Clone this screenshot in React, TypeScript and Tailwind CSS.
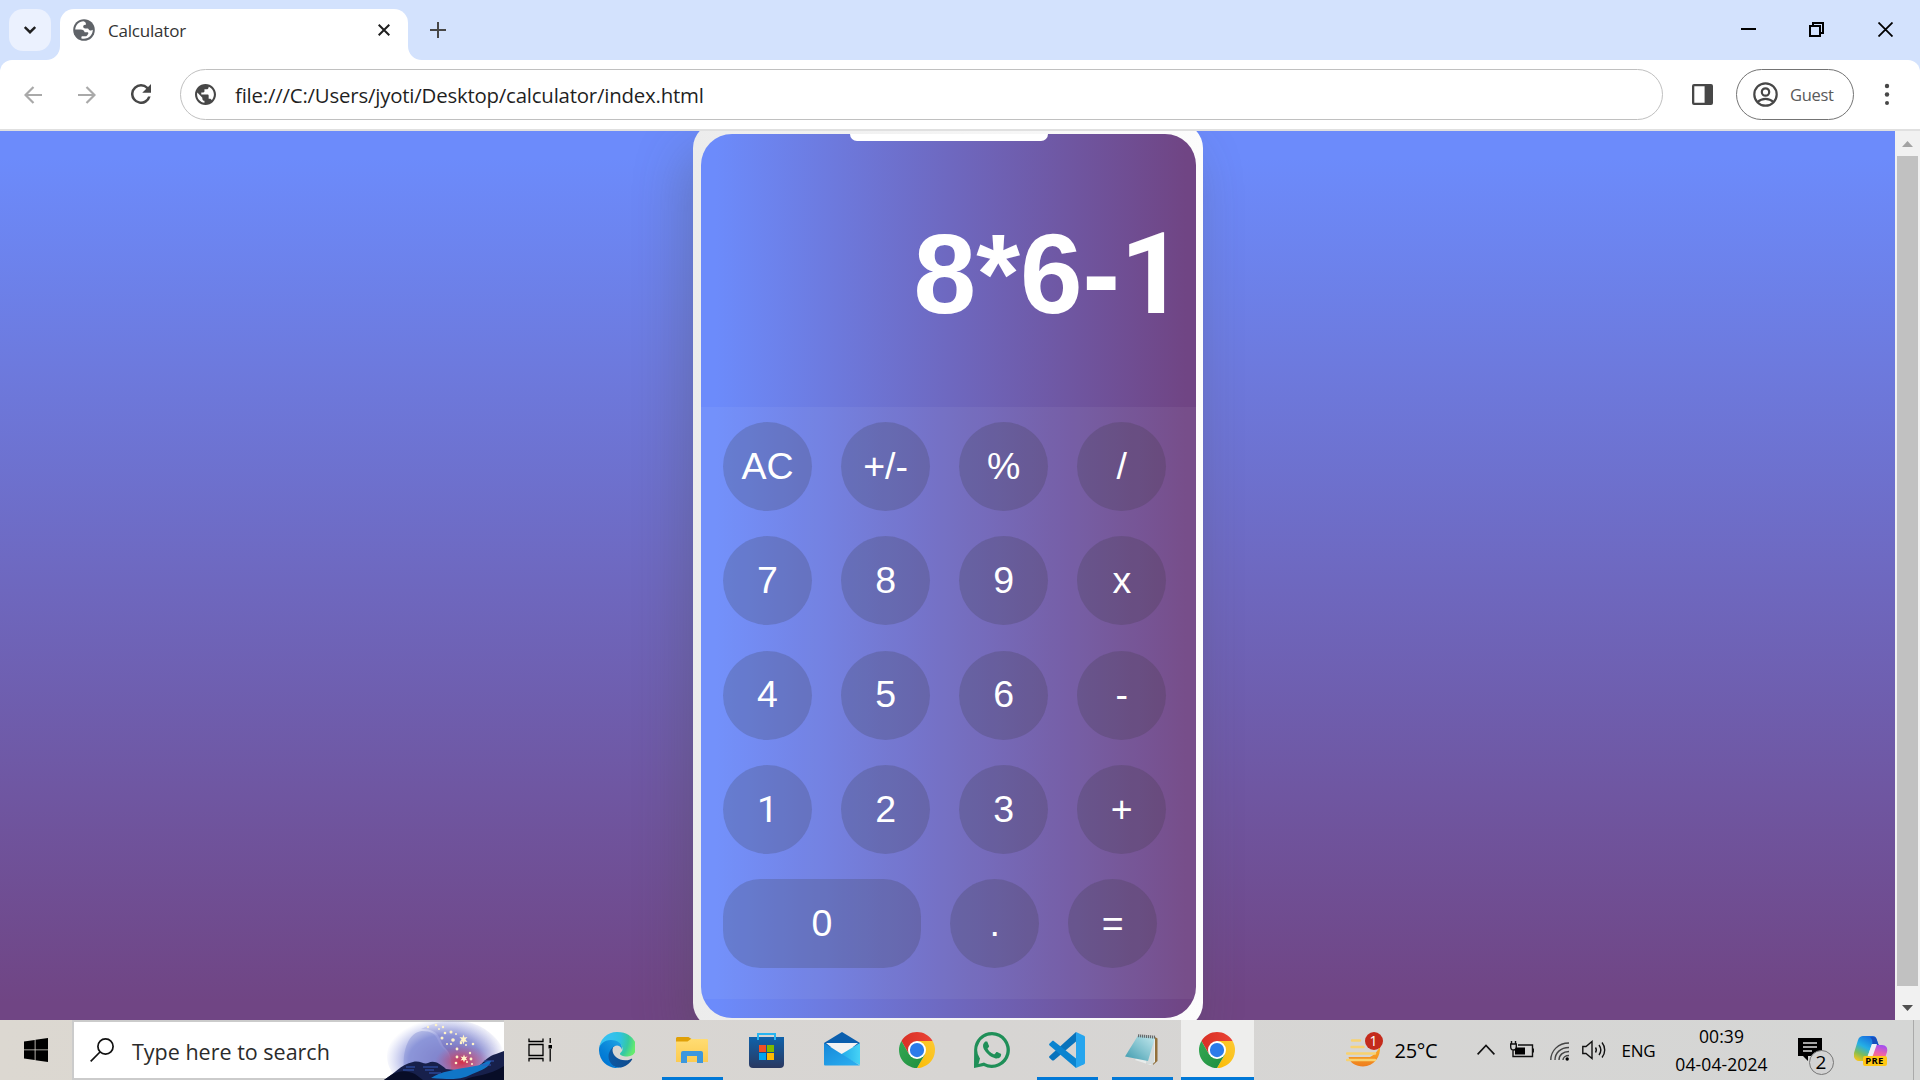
import React from "react";

type IconProps = { className?: string };

const GLOBE =
  "M12 2C6.48 2 2 6.48 2 12s4.48 10 10 10 10-4.48 10-10S17.52 2 12 2zm-1 17.93c-3.95-.49-7-3.85-7-7.93 0-.62.08-1.21.21-1.79L9 15v1c0 1.1.9 2 2 2v1.93zm6.9-2.54c-.26-.81-1-1.39-1.9-1.39h-1v-3c0-.55-.45-1-1-1H8v-2h2c.55 0 1-.45 1-1V7h2c1.1 0 2-.9 2-2v-.41c2.93 1.19 5 4.06 5 7.41 0 2.08-.8 3.97-2.1 5.39z";

function Globe({ className }: IconProps) {
  return (
    <svg viewBox="2 2 20 20" className={className} fill="currentColor">
      <path d={GLOBE} />
    </svg>
  );
}

function TabGlobe({ className }: IconProps) {
  return (
    <svg viewBox="0 0 22 22" className={className}>
      <circle cx="11" cy="11" r="10.8" fill="#5f6368" />
      <path d="M10.5 2.2C6 2.5 2.4 6 2.2 10.6h5.6c2.1 0 3.4 1 3.8 2.6h2.6c1 0 1.4.9.9 1.8l-1 1.4c-.5.6-1.2.9-1.9.9H9.6c-.9 0-1.2.4-1.2.9v1.2A8.9 8.9 0 0 0 19.8 10.8c-1.2.9-2.6 1-3.6.1l-1.2-1.3h-2.8c-1.2 0-2-.9-2-2s.8-1.9 1.9-1.9h.8c.3-1.5-.6-3.2-2.4-3.5Z" fill="#fff" />
    </svg>
  );
}

function Chrome({ className }: IconProps) {
  return (
    <svg viewBox="0 0 48 48" className={className}>
      <defs>
        <linearGradient id="cr" x1="0" x2="1"><stop stopColor="#d93025" /><stop offset="1" stopColor="#ea4335" /></linearGradient>
        <linearGradient id="cy" x1="1" x2="0" y2="1"><stop stopColor="#fcc934" /><stop offset="1" stopColor="#fbbc04" /></linearGradient>
        <linearGradient id="cg" x1="1" y1="1" x2="0" y2="0"><stop stopColor="#1e8e3e" /><stop offset="1" stopColor="#34a853" /></linearGradient>
      </defs>
      <path d="M24 12h20.78A24 24 0 0 0 3.22 12l10.39 18Z" fill="url(#cr)" />
      <path d="M34.39 30 24 48A24 24 0 0 0 44.78 12H24Z" fill="url(#cy)" />
      <path d="M13.61 30 3.22 12A24 24 0 0 0 24 48l10.39-18Z" fill="url(#cg)" />
      <circle cx="24" cy="24" r="12" fill="#fff" />
      <circle cx="24" cy="24" r="9.5" fill="#2b7bea" />
    </svg>
  );
}

function Edge() {
  return (
    <svg viewBox="0 0 256 256" className="size-9">
      <defs>
        <linearGradient id="e1" x1="63" y1="178" x2="241" y2="178" gradientUnits="userSpaceOnUse"><stop stopColor="#0c59a4" /><stop offset="1" stopColor="#114a8b" /></linearGradient>
        <linearGradient id="e2" x1="157" y1="100" x2="46" y2="221" gradientUnits="userSpaceOnUse"><stop stopColor="#1b9de2" /><stop offset=".16" stopColor="#1595df" /><stop offset=".67" stopColor="#0680d7" /><stop offset="1" stopColor="#0078d4" /></linearGradient>
        <radialGradient id="e3" cx="26" cy="45" r="235" gradientUnits="userSpaceOnUse"><stop stopColor="#35c1f1" /><stop offset=".3" stopColor="#34c1ed" /><stop offset=".55" stopColor="#2fc2df" /><stop offset=".78" stopColor="#36c9a0" /><stop offset="1" stopColor="#66eb6e" /></radialGradient>
      </defs>
      <path fill="url(#e1)" d="M231 190a93 93 0 0 1-10 5 102 102 0 0 1-36 6c-47 0-89-33-89-75a32 32 0 0 1 17-28c-43 2-54 47-54 73 0 75 69 82 84 82a104 104 0 0 0 25-4l2-1a128 128 0 0 0 66-53 4 4 0 0 0-5-5Z" />
      <path fill="url(#e2)" d="M106 241a79 79 0 0 1-23-21 81 81 0 0 1 30-120c3-2 8-4 16-4a32 32 0 0 1 25 13 32 32 0 0 1 6 18c0 0 26-83-83-83C31 44 0 87 0 126a130 130 0 0 0 12 57 128 128 0 0 0 156 67 75 75 0 0 1-62-9Z" />
      <path fill="url(#e3)" d="M152 149c-1 1-3 3-3 6 0 3 2 6 5 9 17 12 49 10 49 10a71 71 0 0 0 36-10 73 73 0 0 0 17-94C234 32 201 0 129 0A128 128 0 0 0 0 126c0-38 38-70 84-70 4 0 25 0 45 10a72 72 0 0 1 31 29c6 10 7 24 7 29s-3 13-15 25Z" />
    </svg>
  );
}

function Folder() {
  return (
    <svg viewBox="0 0 32 28" className="h-7 w-8">
      <defs><linearGradient id="fo" x2="0" y2="1"><stop stopColor="#ffdc73" /><stop offset="1" stopColor="#fccb50" /></linearGradient></defs>
      <path d="M1 1h11.500l3 2-3 5H0V2Z" fill="#e0a007" />
      <path d="M0 5.500h11.500L15 3h16a1 1 0 0 1 1 1v22H0Z" fill="url(#fo)" />
      <path d="M5 17a2 2 0 0 1 2-2h18a2 2 0 0 1 2 2v10h-6v-7H11v7H5Z" fill="#3c97dd" />
    </svg>
  );
}

function Store() {
  return (
    <svg viewBox="0 0 35 35" className="mr-[2px] size-[35px]">
      <defs><linearGradient id="st" x2="0" y2="1"><stop stopColor="#0f62ab" /><stop offset="1" stopColor="#2a3860" /></linearGradient></defs>
      <path d="M0 4h35v27a4 4 0 0 1-4 4H4a4 4 0 0 1-4-4Z" fill="url(#st)" />
      <path d="M9 7V1h17v6" fill="none" stroke="#27b5f1" strokeWidth="2" />
      <path d="M10 12h7v7h-7z" fill="#f25022" /><path d="M18 12h7v7h-7z" fill="#7fba00" />
      <path d="M10 20h7v7h-7z" fill="#00a4ef" /><path d="M18 20h7v7h-7z" fill="#ffb900" />
    </svg>
  );
}

function Mail() {
  return (
    <svg viewBox="0 0 36 34" className="-mt-[2px] h-[34px] w-9">
      <defs>
        <linearGradient id="ml" x2="1" y2="1"><stop stopColor="#1687d8" /><stop offset="1" stopColor="#2cb1f2" /></linearGradient>
        <linearGradient id="mr" x1="0" x2="1"><stop stopColor="#20a8e8" /><stop offset="1" stopColor="#46d3f6" /></linearGradient>
      </defs>
      <path d="M0 11 18 0l18 11v4H0Z" fill="#0b5fae" />
      <path d="M2 11h32L18 24Z" fill="#f3f3f3" />
      <path d="M36 11v22L16 23Z" fill="url(#mr)" />
      <path d="M0 11l36 22.500H1a1 1 0 0 1-1-1Z" fill="url(#ml)" />
    </svg>
  );
}

function WhatsApp() {
  return (
    <svg viewBox="0 0 24 24" className="size-9" fill="#1f8f58">
      <path d="M17.472 14.382c-.297-.149-1.758-.867-2.030-.967-.273-.099-.471-.148-.670.150-.197.297-.767.966-.940 1.164-.173.199-.347.223-.644.075-.297-.150-1.255-.463-2.390-1.475-.883-.788-1.480-1.761-1.653-2.059-.173-.297-.018-.458.130-.606.134-.133.298-.347.446-.520.149-.174.198-.298.298-.497.099-.198.050-.371-.025-.520-.075-.149-.669-1.612-.916-2.207-.242-.579-.487-.500-.669-.510-.173-.008-.371-.010-.570-.010-.198 0-.520.074-.792.372-.272.297-1.040 1.016-1.040 2.479 0 1.462 1.065 2.875 1.213 3.074.149.198 2.096 3.200 5.077 4.487.709.306 1.262.489 1.694.625.712.227 1.360.195 1.871.118.571-.085 1.758-.719 2.006-1.413.248-.694.248-1.289.173-1.413-.074-.124-.272-.198-.570-.347z" />
      <path fillRule="evenodd" d="M12 0a12 12 0 1 1-5.500 22.700L0 24l.1-12A11.900 11.900 0 0 1 12 0Zm0 2.200a9.800 9.800 0 0 0-8.300 15l.3.500-1 3.600 3.700-.9.500.2A9.800 9.800 0 1 0 12 2.200Z" />
    </svg>
  );
}

function VSCode() {
  return (
    <svg viewBox="0 0 36 36" className="size-9">
      <path d="M27 0v9.500L5 28.200c-.7.500-1.500.4-2 0L.6 26c-.7-.6-.7-1.500 0-2.100Z" fill="#0873bc" />
      <path d="M.6 13.500c-.7-.6-.7-1.500 0-2.100L3 9.200c.5-.4 1.300-.5 2 0l22 17.300V36Z" fill="#0a84d0" />
      <path d="M27 0l8 3.700c.6.300 1 .8 1 1.500v25.600c0 .7-.4 1.200-1 1.500L27 36Z" fill="#26a5ee" />
    </svg>
  );
}

function Notepad() {
  return (
    <svg viewBox="0 0 34 34" className="h-[34px] w-[34px]">
      <defs><linearGradient id="np" x1="1" y1="0" x2="0" y2="1"><stop stopColor="#c4e9ee" /><stop offset=".5" stopColor="#83c3cf" /><stop offset="1" stopColor="#3b99ad" /></linearGradient></defs>
      <path d="M29 3.500l3.500 2V28L28 32Z" fill="#93703a" />
      <path d="M30 4v25l-4.500 3L10 27Z" fill="#e8eceb" />
      <path d="M28 6v25M26 9v22M24 18v13M22 22v9" stroke="#a8b5b5" strokeWidth=".6" />
      <path d="M13 2.500l17 2L23 28 0 23.500Z" fill="url(#np)" />
      <path d="M13 2.700l17 1.500" stroke="#65696b" strokeWidth="3" strokeDasharray="1.200 .8" />
    </svg>
  );
}

function SearchArt() {
  return (
    <svg viewBox="0 0 120 60" className="h-[60px] w-[120px]">
      <defs>
        <radialGradient id="glow" cx=".5" cy=".55" r=".52">
          <stop offset="0" stopColor="#8580c8" /><stop offset=".6" stopColor="#9aa1df" /><stop offset="1" stopColor="#b9bfec" stopOpacity="0" />
        </radialGradient>
        <radialGradient id="red"><stop stopColor="#d52f46" /><stop offset="1" stopColor="#b65a94" stopOpacity="0" /></radialGradient>
        <linearGradient id="sky" x2="0" y2="1"><stop stopColor="#8991d6" stopOpacity=".2" /><stop offset=".6" stopColor="#6d68b5" /><stop offset="1" stopColor="#c06e96" /></linearGradient>
        <linearGradient id="fade"><stop offset=".6" stopColor="#fff" /><stop offset="1" stopColor="#fff" stopOpacity="0" /></linearGradient>
        <mask id="skyMask"><rect width="120" height="60" fill="url(#fade)" /></mask>
      </defs>
      <ellipse cx="61" cy="36" rx="58" ry="40" fill="url(#glow)" />
      <path d="M38 11c18 0 14 12 22 18 7 6 6 15 6 21H20c-2-20 5-38 18-39Z" fill="#7381cf" opacity=".35" />
      <path d="M37 9c22 0 17 13 25 20 6 6 5 14 5 20h53V30C107 5 75-10 37 9Z" fill="url(#sky)" opacity=".6" mask="url(#skyMask)" />
      <ellipse cx="78" cy="42" rx="27" ry="18" fill="url(#red)" />
      <path d="M0 60C9 55 17 44 29 42c7-2 11 3 15 1 6-3 11 0 18 6l18 2c18-1 18-13 32-17l8-3v29Z" fill="#17204b" />
      <path d="M47 58c8-6 26-9 44-12 10-1 10-6 16-5-2 8-15 11-23 15-8 3-13 4-37 2Z" fill="#1176c7" />
      <path d="M22 47h9M19 50h11M39 47h15M41 50h9M45 53h12M100 41h10M98 45h9" stroke="#3559ba" strokeWidth="1" />
      <path d="M0 60c10-7 17-12 31-6l8 6ZM80 60c10-5 25-4 40-14v14Z" fill="#080d27" />
      <g fill="#fff3c8">
        <circle cx="44" cy="7" r="1.200" /><circle cx="52" cy="5" r="1.300" /><circle cx="59" cy="7" r="1.200" /><circle cx="55" cy="9" r="1" /><circle cx="61" cy="13" r="1.300" /><circle cx="67" cy="12" r="1.500" />
        <circle cx="72" cy="14" r="1" /><circle cx="58" cy="18" r="1.500" /><circle cx="69" cy="20" r="1.800" /><circle cx="77" cy="23" r="1.300" /><circle cx="89" cy="24" r="1.300" /><circle cx="82" cy="25" r="1" />
        <circle cx="73" cy="29" r="1.400" /><circle cx="67" cy="24" r="1" /><circle cx="63" cy="24" r="1" /><circle cx="86" cy="33" r="1.200" /><circle cx="73" cy="37" r="1.400" /><circle cx="87" cy="39" r="1.400" /><circle cx="72" cy="43" r="1.300" /><circle cx="83" cy="42" r="1" /><circle cx="88" cy="44" r="1" />
        <path d="m79.500 14.500 1 3 3-.5-2 2.500 2 2.500-3-.5-1 3-1-3-3 .5 2-2.500-2-2.500 3 .5ZM80 34.500l1 2.500 2.500-.5-1.700 2 1.700 2-2.500-.4-1 2.400-1-2.400-2.500.4 1.700-2-1.700-2 2.500.5Z" />
      </g>
    </svg>
  );
}

function Weather() {
  return (
    <svg viewBox="0 0 36 36" className="size-9">
      <defs><linearGradient id="wt" x2="0" y2="1"><stop stopColor="#fbb32a" /><stop offset="1" stopColor="#ee7d1d" /></linearGradient></defs>
      <path d="M34 14c1 11-6 20-17 20.500C10 34.500 4 31 2.500 25H24c4-2 8-6 10-11Z" fill="url(#wt)" />
      <path d="M6 8.500h8M5.500 15h12M1 21.500h28M1 28h28" stroke="#f8d270" strokeWidth="2.400" strokeLinecap="round" />
    </svg>
  );
}

function Copilot() {
  return (
    <svg viewBox="0 0 34 32" className="h-8 w-[34px]">
      <defs>
        <linearGradient id="c1" x1=".7" y1="0" x2=".2" y2="1"><stop stopColor="#1669df" /><stop offset=".45" stopColor="#25b0e5" /><stop offset=".75" stopColor="#82bd55" /><stop offset="1" stopColor="#f4c51b" /></linearGradient>
        <linearGradient id="c2" x1=".6" y1="0" x2=".3" y2="1"><stop stopColor="#a44ff0" /><stop offset=".5" stopColor="#ef63a6" /><stop offset="1" stopColor="#fb8b4f" /></linearGradient>
      </defs>
      <path d="M9 0h10c3 0 4 3 5 8h-6l-5 14c-1 2-2 3-4 3H5c-4 0-6-4-5-8L4 4c1-3 3-4 5-4Z" fill="url(#c1)" />
      <path d="M16 1h4c3 0 3 5 5 8h-7c1-4 0-6-2-8Z" fill="#174fbd" />
      <path d="M20 9h8c4 0 6 3 5 7l-3 9H14Z" fill="url(#c2)" />
      <path d="M18 8h5l-5 14h-5Z" fill="#eef0f5" />
    </svg>
  );
}

function Key({ label, wide }: { label: string; wide?: boolean }) {
  return (
    <button
      className={
        wide
          ? "flex h-[89px] w-[198px] items-center justify-center rounded-[37.5px] bg-[rgba(51,51,51,0.2)] text-[37.5px] leading-none text-white"
          : "flex h-[89px] w-[89px] items-center justify-center rounded-full bg-[rgba(51,51,51,0.2)] text-[37.5px] leading-none text-white"
      }
    >
      {label === "1" ? <span className="font-['Roboto',sans-serif]">1</span> : label}
    </button>
  );
}

const rows = [
  ["AC", "+/-", "%", "/"],
  ["7", "8", "9", "x"],
  ["4", "5", "6", "-"],
  ["1", "2", "3", "+"],
  ["0", ".", "="],
];

function BrowserBar() {
  return (
    <header className="h-[131px] shrink-0 bg-[#d3e2fd] text-[#1f1f1f]">
      <div className="flex h-[60px] pt-[9px]">
        <div className="ml-[9px] flex size-[42px] items-center justify-center rounded-[14px] bg-[#ebf1fe]">
          <svg viewBox="0 0 12 8" className="h-2 w-3" fill="none" stroke="#1f1f1f" strokeWidth="2.400"><path d="m.8 1 5.200 5.200L11.200 1" /></svg>
        </div>
        <svg viewBox="0 0 14 14" className="-ml-[5px] mt-[37px] size-[14px]" fill="#fff"><path d="M14 0v14H0C8 14 14 8 14 0Z" /></svg>
        <div className="flex h-[51px] w-[348px] rounded-t-[14px] bg-white">
          <TabGlobe className="ml-[13px] mt-[10px] size-[22px]" />
          <span className="ml-[13px] mt-[10px] w-[100px] text-[17px] leading-6 tracking-[-0.2px] text-[#333]">Calculator</span>
          <svg viewBox="0 0 12 12" className="ml-[170px] mt-[15px] size-3" stroke="#1f1f1f" strokeWidth="2"><path d="m.7.7 10.600 10.600M11.300.7.700 11.300" /></svg>
        </div>
        <svg viewBox="0 0 14 14" className="mt-[37px] size-[14px]" fill="#fff"><path d="M0 0v14h14C6 14 0 8 0 0Z" /></svg>
        <svg viewBox="0 0 16 16" className="ml-2 mt-[13px] size-4" stroke="#474747" strokeWidth="2"><path d="M8 0v16M0 8h16" /></svg>
        <div className="ml-auto mr-[27px] mt-[13px] flex gap-[53px]">
          <svg viewBox="0 0 15 15" className="size-[15px]" stroke="#000" strokeWidth="2"><path d="M0 7h15" /></svg>
          <svg viewBox="0 0 15 15" className="size-[15px]" fill="none" stroke="#000" strokeWidth="2"><path d="M1 4h10v10H1zM4 4V1h10v10h-3" /></svg>
          <svg viewBox="0 0 15 15" className="ml-px size-[15px]" stroke="#000" strokeWidth="1.800"><path d="m.5.5 14 14M14.500.5l-14 14" /></svg>
        </div>
      </div>
      <div className="flex h-[71px] items-start rounded-t-[12px] border-b-2 border-[#e0e0e0] bg-white pt-[9px]">
        <svg viewBox="0 0 18 18" className="ml-6 mt-[17px] size-[18px]" fill="none" stroke="#a9a9a9" strokeWidth="2.200"><path d="M18 9H2M9.500 1 1.500 9l8 8" /></svg>
        <svg viewBox="0 0 18 18" className="ml-9 mt-[17px] size-[18px]" fill="none" stroke="#a9a9a9" strokeWidth="2.200"><path d="M0 9h16M8.500 1l8 8-8 8" /></svg>
        <svg viewBox="4 4 16 16" className="ml-[35px] mt-[15px] size-5" fill="#474747"><path d="M17.650 6.350A7.960 7.960 0 0 0 12 4a8 8 0 1 0 7.730 10h-2.080A6 6 0 1 1 12 6c1.660 0 3.140.69 4.220 1.780L13 11h7V4l-2.350 2.350z" /></svg>
        <div className="ml-[29px] flex h-[51px] w-[1483px] rounded-full border-[1.500px] border-[#c0c0c0]">
          <Globe className="ml-[14px] mt-[14px] size-[21px] text-[#474747]" />
          <span className="ml-[19px] mt-[11px] text-[20.400px] leading-7 tracking-[-0.2px] whitespace-nowrap">file:///C:/Users/jyoti/Desktop/calculator/index.html</span>
        </div>
        <svg viewBox="0 0 21 21" className="ml-[29px] mt-[15px] size-[21px]"><path fillRule="evenodd" d="M2 0h17a2 2 0 0 1 2 2v17a2 2 0 0 1-2 2H2a2 2 0 0 1-2-2V2a2 2 0 0 1 2-2Zm.3 2.300v16.400h10.300V2.300Z" fill="#474747" /></svg>
        <div className="ml-[23px] flex h-[51px] w-[118px] rounded-full border border-[#747474]">
          <svg viewBox="0 0 25 25" className="ml-4 mt-3 size-[25px]" fill="none" stroke="#474747" strokeWidth="2.200"><circle cx="12.500" cy="12.500" r="11.200" /><circle cx="12.500" cy="10" r="3.700" /><path d="M4.500 20c4.500-4.300 11.500-4.300 16 0" /></svg>
          <span className="ml-[12px] mt-[13px] text-[16.500px] leading-6 tracking-[-0.300px] text-[#5a5a5a]">Guest</span>
        </div>
        <svg viewBox="0 0 6 22" className="ml-[30px] mt-[14px] h-[22px] w-[6px]" fill="#474747"><circle cx="3" cy="3" r="2.200" /><circle cx="3" cy="11.500" r="2.200" /><circle cx="3" cy="20" r="2" /></svg>
      </div>
    </header>
  );
}

function Calculator() {
  return (
    <div className="mt-[-8px] ml-[1px] h-[905px] w-[509.5px] shrink-0 rounded-[25px] bg-linear-to-r/srgb from-[#ececec] to-[#fcfcfc] px-[7.250px] pt-[11px] shadow-[-10px_25px_50px_rgba(75,75,75,0.28)]">
      <div className="flex h-[884px] w-[495px] flex-col overflow-hidden rounded-[31px] bg-linear-to-r/srgb from-[#6c8bfb] from-3% to-[#704584] to-98% font-['Liberation_Sans',sans-serif]">
        <div className="ml-px h-[7px] w-[198px] self-center rounded-b-[7px] bg-white" />
        <div className="flex h-[266px] items-center justify-end pr-[11px] text-[112.5px] leading-none font-bold text-white">
          <span className="mt-[1px]">8*6-<span className="font-['Roboto',sans-serif]">1</span></span>
        </div>
        <div className="flex h-[592px] flex-col gap-[25.25px] bg-white/5 pt-[15px] pl-[22.5px]">
          {rows.map((row) => (
            <div key={row[0]} className="flex gap-[29.1px]">
              {row.map((k) => <Key key={k} label={k} wide={k === "0"} />)}
            </div>
          ))}
        </div>
      </div>
    </div>
  );
}

function Slot({ children, bar }: { children: React.ReactNode; bar?: boolean }) {
  return (
    <div className="relative flex h-[60px] w-[75px] items-center justify-center">
      {children}
      {bar && <div className="absolute bottom-0 left-[7.5px] h-[3px] w-[61px] bg-[#0078d7]" />}
    </div>
  );
}

function Taskbar() {
  return (
    <footer className="flex h-[60px] shrink-0 bg-linear-to-r/srgb from-[#dcd8d1] via-[#d7d5d3] to-[#d5d6d5] text-black">
      <div className="flex w-[72px] items-center justify-center">
        <svg viewBox="0 0 24 24" className="size-6"><path d="M0 3.400 10.700 2v9.500H0ZM11.500 1.800 24 0v11.500H11.500ZM0 12.300h10.700v9.600L0 20.500ZM11.500 12.300H24V24l-12.500-1.800Z" /></svg>
      </div>
      <div className="flex h-[60px] w-[432px] border-2 border-r-0 border-[#cbcbcb] bg-white">
        <svg viewBox="0 0 24 24" className="ml-4 mt-4 size-6" fill="none" stroke="#111" strokeWidth="1.700"><circle cx="15.500" cy="8.500" r="7.600" /><path d="M10 14 .7 23.300" /></svg>
        <span className="ml-[18px] mt-[14px] w-[215px] text-[21.500px] leading-8 whitespace-nowrap text-[#2b2b2b]">Type here to search</span>
        <div className="-mt-[2px] ml-auto h-[60px] w-[120px]"><SearchArt /></div>
      </div>
      <div className="flex w-[75.5px] items-center pl-6">
        <svg viewBox="0 0 24 24" className="size-6" fill="none" stroke="#000" strokeWidth="1.300"><path d="M1 6.500h14v11H1zM1 .5v3h14v-3M1 23.500v-3h14v3M22.200 0v5M22.200 11v12.500" /><path d="M20.500 7h3.500v3.500h-3.500z" fill="#000" stroke="none" /></svg>
      </div>
      <Slot><Edge /></Slot>
      <Slot bar><Folder /></Slot>
      <Slot><Store /></Slot>
      <Slot><Mail /></Slot>
      <Slot><Chrome className="size-9" /></Slot>
      <Slot><WhatsApp /></Slot>
      <Slot bar><VSCode /></Slot>
      <Slot bar>
        <Notepad />
        <div className="absolute right-[6.500px] bottom-0 h-[3px] w-3 bg-[#66abe2]" />
      </Slot>
      <div className="ml-[1px] flex w-[73px] items-center justify-center border-b-[3px] border-[#0078d7] bg-[#eeeeed] pt-[3px]"><Chrome className="size-9" /></div>
      <div className="relative ml-[92px] mt-3 size-9">
        <Weather />
        <div className="absolute top-0 left-[19px] flex size-[18px] items-center justify-center rounded-full bg-[#c42b1c] text-[14px] leading-none text-white">1</div>
      </div>
      <span className="ml-[13px] mt-[16px] w-[70px] text-[20px] leading-[30px] tracking-[-0.3px]">25°C</span>
      <svg viewBox="0 0 18 11" className="ml-3 mt-6 h-[11px] w-[18px]" fill="none" stroke="#111" strokeWidth="1.600"><path d="m.6 10.400 8.400-9 8.400 9" /></svg>
      <svg viewBox="0 0 24 17" className="ml-[15px] mt-[21px] h-[17px] w-6" fill="none" stroke="#111" strokeWidth="1.400"><path d="M8 4h14.500v11.500H3V9M23.500 7.500v4M1.500 0v3M5.500 0v3M.7 3h5.600v3c0 2-1 3-2.800 3S.7 8 .7 6Z" /><path d="M6 6.500h9v7H5V9Z" fill="#000" stroke="none" /></svg>
      <svg viewBox="0 0 20 19" className="ml-4 mt-[22px] h-[19px] w-5" fill="none" stroke="#444" strokeWidth="1.400"><path d="M.8 18C.8 9 8 1 19 1M5 18c0-7 5.500-12.500 14-12.500M9 18c0-5 4-8.500 10-8.500M13 18c0-2.500 2.500-4.500 6-4.500" /><circle cx="17.200" cy="17" r="1.700" fill="#000" stroke="none" /></svg>
      <svg viewBox="0 0 24 20" className="ml-3 mt-5 h-5 w-6" fill="none" stroke="#111" strokeWidth="1.400"><path d="M.8 6.500H4L10 1.500v17l-6-5H.8ZM13.500 7.500c1 1.500 1 3.500 0 5M17 5c2.200 3 2.200 7 0 10M20 2.500c3.600 4.500 3.600 10.500 0 15" /></svg>
      <span className="ml-[16px] mt-[16px] w-[34px] text-[17px] leading-[30px] tracking-[-0.3px]">ENG</span>
      <div className="ml-[17px] mt-[2px] flex w-[98px] flex-col items-center text-[17.500px] leading-7 tracking-[0.1px] whitespace-nowrap"><span>00:39</span><span>04-04-2024</span></div>
      <div className="relative ml-[27px] mt-[18px] h-9 w-9">
        <svg viewBox="0 0 24 24" className="size-6"><path d="M0 0h24v18H10v5l-5-5H0Z" /><path d="M5 5h14M5 9h14M5 13h9" stroke="#ddd" strokeWidth="1.400" /></svg>
        <div className="absolute top-[12px] left-[11px] flex size-[25px] items-center justify-center rounded-full border border-[#777] bg-[#d3d3d3] text-[19px] leading-none font-medium">2</div>
      </div>
      <div className="relative ml-5 mt-4 h-8 w-[34px]">
        <Copilot />
        <div className="absolute top-[20px] left-[9px] flex h-[10px] w-6 items-center justify-center rounded-[2px] bg-[#ffc815] text-[9.500px] leading-none font-bold tracking-[0.300px]">PRE</div>
      </div>
      <div className="ml-auto mr-[6px] h-[60px] w-[1.500px] bg-[#aaa]" />
    </footer>
  );
}

export default function App() {
  return (
    <div className="flex h-[1080px] w-[1920px] flex-col overflow-hidden font-['Open_Sans',sans-serif]">
      <BrowserBar />
      <main className="flex h-[889px] shrink-0">
        <div className="flex h-[889px] w-[1895px] justify-center overflow-hidden bg-linear-to-b/srgb from-[#6c8bfb] from-3% to-[#704584] to-98%">
          <Calculator />
        </div>
        <div className="flex h-[889px] w-[25px] flex-col items-center bg-[#f1f1f1]">
          <svg viewBox="0 0 11 6" className="mt-[10px] h-[6px] w-[11px]" fill="#a3a3a3"><path d="M5.500 0 11 6H0Z" /></svg>
          <div className="mt-[9px] h-[830px] w-[21px] bg-[#c1c1c1]" />
          <svg viewBox="0 0 11 6" className="mt-[19px] h-[6px] w-[11px]" fill="#505050"><path d="M0 0h11L5.500 6Z" /></svg>
        </div>
      </main>
      <Taskbar />
    </div>
  );
}
